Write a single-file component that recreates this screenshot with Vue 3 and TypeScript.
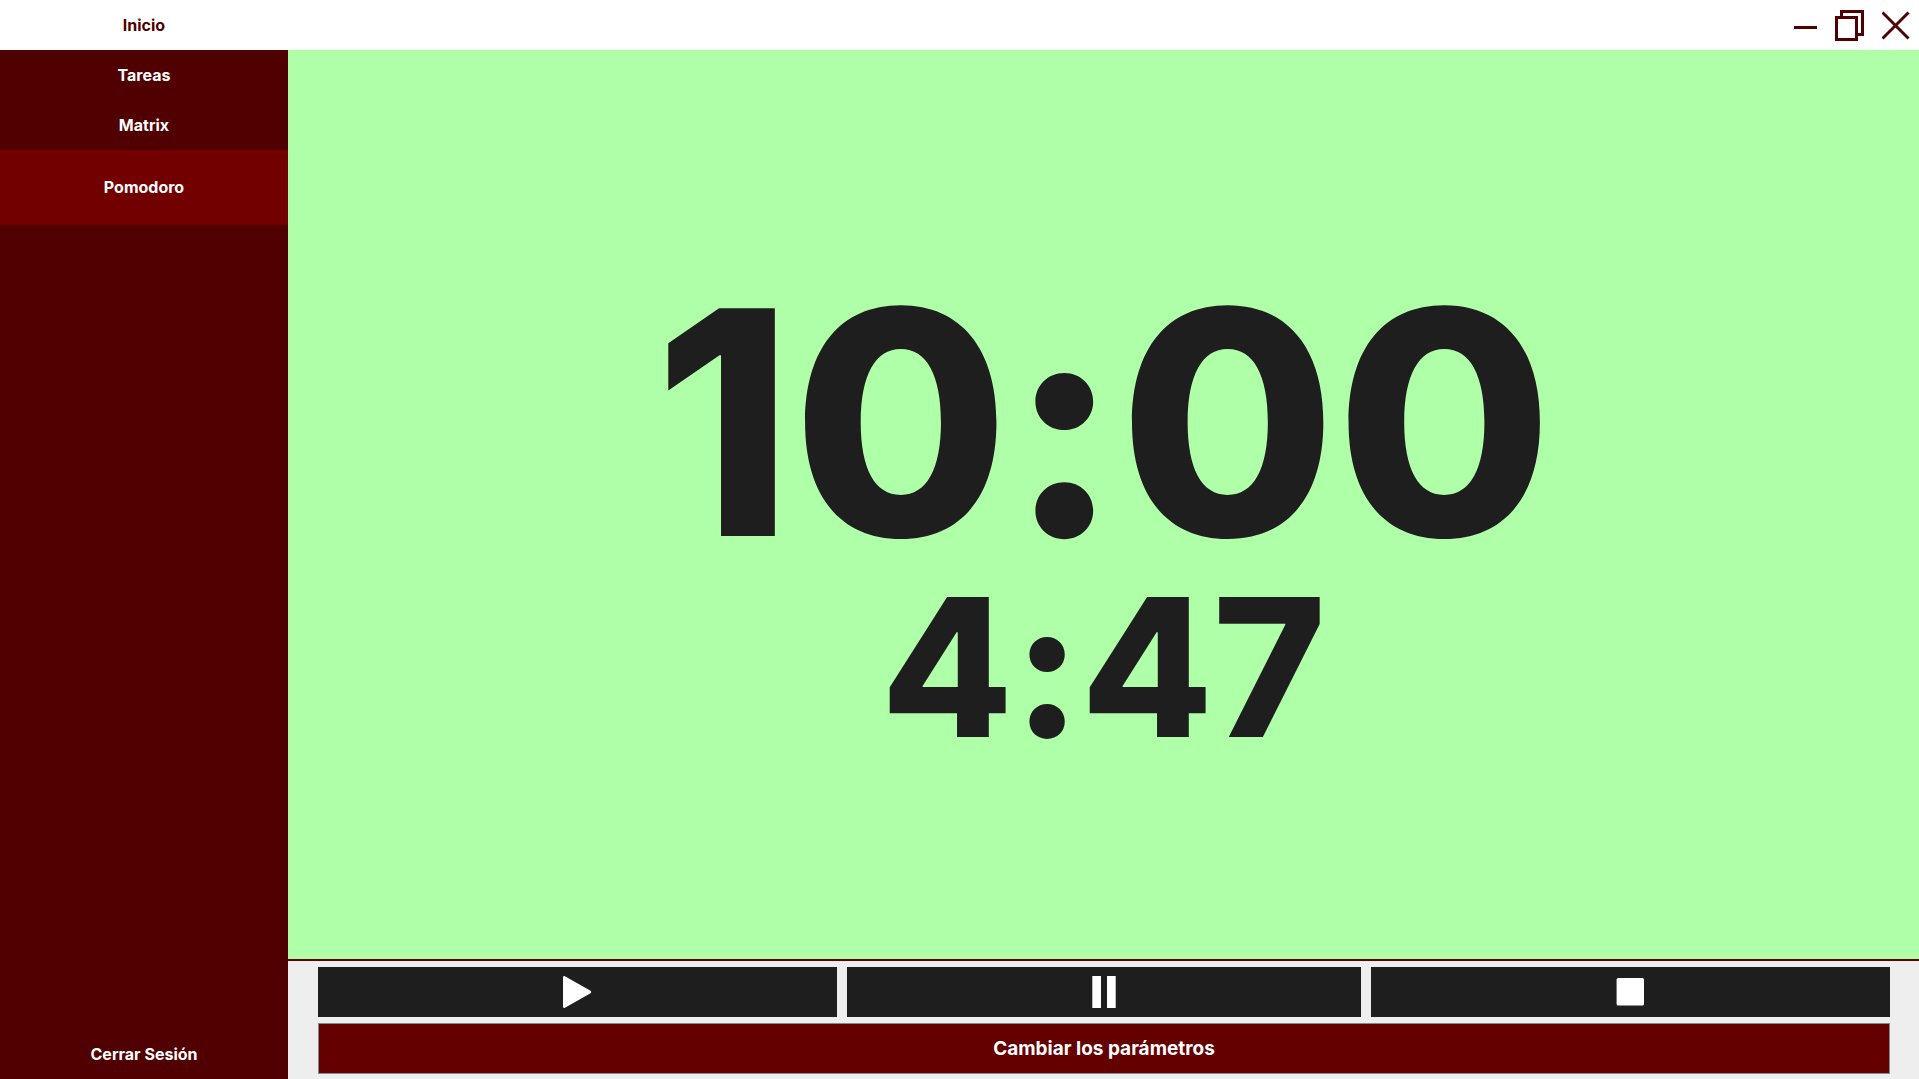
<script setup lang="ts">
import { ref } from 'vue'

interface Section {
  name: string
  active: boolean
}

const sections: Section[] = [
  { name: 'Tareas', active: false },
  { name: 'Matrix', active: false },
  { name: 'Pomodoro', active: true },
]

const total = ref('10:00')
const remaining = ref('4:47')
</script>

<template>
  <div class="window">
    <header class="titlebar">
      <a class="home" href="#inicio">Inicio</a>
      <div class="window-controls">
        <button type="button" aria-label="Minimizar">
          <svg width="24" height="32" viewBox="0 0 24 32"><path d="M0 18.500H23" /></svg>
        </button>
        <button type="button" aria-label="Restaurar">
          <svg width="30" height="32" viewBox="0 0 30 32">
            <path d="M6.500 7V2.500H27.500V25.500H22" />
            <path d="M1.500 8.500H21.500V30.500H1.500Z" />
          </svg>
        </button>
        <button type="button" aria-label="Cerrar">
          <svg width="28" height="32" viewBox="0 0 28 32"><path d="M.5 3.500L26.500 29.500M26.500 3.500L.5 29.500" /></svg>
        </button>
      </div>
    </header>

    <div class="body">
      <nav class="sidebar">
        <a
          v-for="section in sections"
          :key="section.name"
          class="nav-item"
          :class="{ active: section.active }"
          :href="'#' + section.name.toLowerCase()"
        >{{ section.name }}</a>
        <button type="button" class="nav-item logout">Cerrar Sesión</button>
      </nav>

      <main class="main">
        <section class="clock">
          <div class="total">{{ total }}</div>
          <div class="remaining">{{ remaining }}</div>
        </section>

        <footer class="controls">
          <div class="transport">
            <button type="button" aria-label="Iniciar">
              <svg width="29" height="32" viewBox="0 0 29 32">
                <path d="M0 1.500Q0 -.5 2 .3L27.500 14.800Q29 16 27.500 17.200L2 31.700Q0 32.500 0 30.500Z" />
              </svg>
            </button>
            <button type="button" aria-label="Pausar">
              <svg width="24" height="32" viewBox="0 0 24 32"><path d="M.3 0H9V32H.3ZM15 0H23.700V32H15Z" /></svg>
            </button>
            <button type="button" aria-label="Detener">
              <svg width="29" height="32" viewBox="0 0 29 32"><rect x=".6" y="2" width="27.400" height="27.500" rx="1.500" /></svg>
            </button>
          </div>
          <button type="button" class="params">Cambiar los parámetros</button>
        </footer>
      </main>
    </div>
  </div>
</template>

<style>
body {
  margin: 0;
}
</style>

<style scoped>
.window {
  display: flex;
  flex-direction: column;
  min-height: 100vh;
  font-family: Inter, sans-serif;
  font-size: 16px;
  font-weight: 700;
  background: #eeeeee;
}

a {
  text-decoration: none;
}

button {
  margin: 0;
  padding: 0;
  border: 0;
  font: inherit;
  cursor: pointer;
}

svg {
  display: block;
}

.titlebar {
  display: flex;
  justify-content: space-between;
  background: #ffffff;
}

.home {
  width: 288px;
  line-height: 50px;
  text-align: center;
  color: #500000;
}

.window-controls {
  display: flex;
  align-items: center;
  gap: 17px;
  padding-right: 9px;
}

.window-controls button {
  background: none;
}

.window-controls path {
  fill: none;
  stroke: #500000;
  stroke-width: 3;
}

.body {
  display: flex;
  flex: 1;
}

.sidebar {
  display: flex;
  flex-direction: column;
  width: 288px;
  background: #500000;
}

.nav-item {
  line-height: 50px;
  text-align: center;
  color: #ffffff;
  background: #500000;
}

.nav-item.active {
  line-height: 75px;
  background: #730000;
}

.logout {
  margin-top: auto;
}

.main {
  display: flex;
  flex: 1;
  flex-direction: column;
}

/* Contextual alternates are off so the colon stays on the baseline. */
.clock {
  display: flex;
  flex: 1;
  flex-direction: column;
  align-items: center;
  justify-content: center;
  font-weight: 800;
  font-feature-settings: 'calt' 0;
  color: #1e1e1e;
  background: #aeffa8;
}

.total {
  font-size: 313px;
  line-height: 325px;
}

.remaining {
  font-size: 192px;
  line-height: 165px;
}

.controls {
  display: flex;
  flex-direction: column;
  gap: 6px;
  padding: 6px 29px 5px 30px;
  border-top: 2px solid #640000;
}

.transport {
  display: flex;
  gap: 10px;
}

.transport button {
  display: flex;
  flex: 1 1 auto;
  align-items: center;
  justify-content: center;
  height: 50px;
  background: #1e1e1e;
}

.transport svg {
  fill: #ffffff;
}

.params {
  height: 51px;
  border: 1px solid #7a8a99;
  font-size: 19px;
  color: #ffffff;
  background: #640000;
}
</style>
